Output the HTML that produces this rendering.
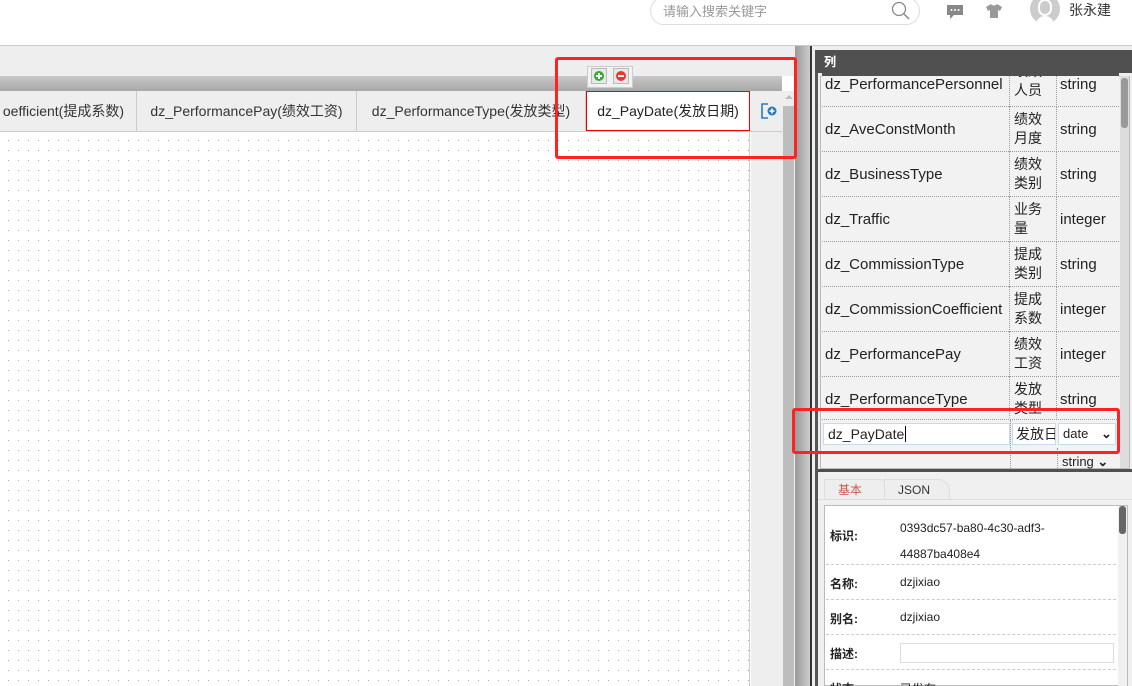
<!DOCTYPE html>
<html style="overflow:hidden;width:1132px;height:686px"><head><meta charset="utf-8">
<style>
*{margin:0;padding:0;box-sizing:border-box}
body{width:1132px;height:686px;overflow:hidden;background:#fff;font-family:"Liberation Sans","Noto Sans CJK SC",sans-serif;position:relative;color:#222}
.a{position:absolute}
.cjk{font-family:"Noto Sans CJK SC","Liberation Sans",sans-serif}
.tab{position:absolute;top:91px;height:40px;line-height:40px;font-size:14px;color:#333;border-right:1px solid #ccc;text-align:center;white-space:nowrap;overflow:hidden}
.row{position:absolute;left:822px;width:297px;height:45px;border-bottom:1px dotted #999;background:#f2f2f2;font-size:15px;color:#222}
.row div{position:absolute;top:0;height:45px}
.c1{left:0;width:188px;border-right:1px dotted #999;padding-left:3px;line-height:45px;white-space:nowrap;overflow:hidden}
.c2{left:189px;width:46px;border-right:1px dotted #999;padding-left:3px;line-height:19px;padding-top:3px;font-size:14px}
.c3{left:236px;width:61px;padding-left:2px;line-height:45px}
.fl{position:absolute;left:826px;width:290px;border-bottom:1px dashed #ccc;font-size:12px}
.fl b{position:absolute;left:4px;font-weight:bold;color:#222}
.fl span{position:absolute;left:74px;color:#222}
</style></head><body>
<div class="a" style="left:0;top:45px;width:1132px;height:1px;background:#ccc"></div>
<div class="a" style="left:650px;top:-3px;width:270px;height:28px;border:1px solid #ddd;border-radius:14px"></div>
<div class="a cjk" style="left:663px;top:1px;font-size:13px;color:#999">请输入搜索关键字</div>
<svg class="a" style="left:891px;top:1px" width="20" height="20" viewBox="0 0 20 20"><circle cx="8" cy="8" r="6.5" fill="none" stroke="#888" stroke-width="1.3"/><line x1="13" y1="13" x2="18" y2="18" stroke="#888" stroke-width="1.5"/></svg>
<svg class="a" style="left:946px;top:4px" width="18" height="16" viewBox="0 0 18 16"><path d="M1 1h16v10H8l-4 4v-4H1z" fill="#888"/><circle cx="5.5" cy="6" r="1" fill="#fff"/><circle cx="9" cy="6" r="1" fill="#fff"/><circle cx="12.5" cy="6" r="1" fill="#fff"/></svg>
<svg class="a" style="left:985px;top:3px" width="18" height="16" viewBox="0 0 18 16"><path d="M6 1L1 4l2 4 2-1v8h8V7l2 1 2-4-5-3c-1 2-5 2-6 0z" fill="#999"/></svg>
<div class="a" style="left:1030px;top:-6px;width:30px;height:30px;border-radius:50%;background:#ccc;overflow:hidden"><div class="a" style="left:8px;top:5px;width:14px;height:17px;border-radius:7px;background:#fff"></div><div class="a" style="left:6px;top:22px;width:18px;height:10px;border-radius:9px 9px 0 0;background:#fff"></div><div class="a" style="left:10px;top:7px;width:10px;height:13px;border-radius:5px;background:#ccc"></div></div>
<div class="a cjk" style="left:1069px;top:0px;font-size:14px;color:#333">张永建</div>

<div class="a" style="left:0;top:46px;width:810px;height:30px;background:#eee"></div>
<div class="a" style="left:0;top:76px;width:782px;height:15px;background:linear-gradient(#c8c8c8,#a8a8a8)"></div>
<div class="a" style="left:0;top:91px;width:782px;height:41px;background:#eee;border-bottom:1px solid #ccc"></div>
<div class="tab" style="left:0;width:137px;text-align:right;padding-right:12px">oefficient(提成系数)</div>
<div class="tab" style="left:137px;width:220px">dz_PerformancePay(绩效工资)</div>
<div class="tab" style="left:357px;width:229px">dz_PerformanceType(发放类型)</div>
<div class="a" style="left:586px;top:91px;width:164px;height:40px;background:#fff;border:1px solid #e00;line-height:38px;text-align:center;font-size:14px;color:#222">dz_PayDate(发放日期)</div>
<svg class="a" style="left:760px;top:102px" width="18" height="18" viewBox="0 0 18 18"><path d="M8 2H2v14h6" fill="none" stroke="#2a7ac0" stroke-width="1.6"/><circle cx="12" cy="9" r="4.5" fill="#2a7ac0"/><path d="M12 6.5v5M9.5 9h5" stroke="#fff" stroke-width="1.5"/></svg>
<div class="a" style="left:0;top:132px;width:750px;height:554px;background-color:#fff;background-image:radial-gradient(circle at 0.5px 0.5px,#aaa 0.6px,transparent 0.7px);background-size:10px 10px;background-position:8px 8px;border-right:1px solid #ccc"></div>
<div class="a" style="left:751px;top:132px;width:31px;height:554px;background:#eee"></div>
<div class="a" style="left:782px;top:91px;width:13px;height:595px;background:#eee"></div>
<div class="a" style="left:783px;top:106px;width:11px;height:580px;background:#bdbdbd"></div>
<div class="a" style="left:785px;top:95px;width:0;height:0;border:4px solid transparent;border-bottom-color:#bbb;border-top:0"></div>
<div class="a" style="left:795px;top:46px;width:15px;height:640px;background:linear-gradient(90deg,#999,#ccc)"></div>
<div class="a" style="left:810px;top:46px;width:2px;height:640px;background:#333"></div>
<div class="a" style="left:812px;top:46px;width:3px;height:640px;background:#eee"></div>

<div class="a" style="left:587px;top:66px;width:46px;height:22px;background:#f2f2f2;border:1px solid #ccc"></div>
<div class="a" style="left:591px;top:68px;width:16px;height:16px;border:1px solid #bbb;background:#e8e8e8"><div class="a" style="left:2px;top:2px;width:10px;height:10px;border-radius:50%;background:#3a3"></div><div class="a" style="left:4px;top:6px;width:6px;height:2px;background:#fff"></div><div class="a" style="left:6px;top:4px;width:2px;height:6px;background:#fff"></div></div>
<div class="a" style="left:613px;top:68px;width:16px;height:16px;border:1px solid #bbb;background:#e8e8e8"><div class="a" style="left:2px;top:2px;width:10px;height:10px;border-radius:50%;background:#e33"></div><div class="a" style="left:4px;top:6px;width:6px;height:2px;background:#fff"></div></div>

<div class="a" style="left:815px;top:46px;width:317px;height:640px;background:#eee"></div>
<div class="a" style="left:815px;top:50px;width:3px;height:636px;background:#555"></div>
<div class="a cjk" style="left:815px;top:50px;width:317px;height:23px;background:#505050;color:#fff;font-weight:bold;font-size:12px;line-height:23px;padding-left:9px">列</div>
<div class="a" style="left:820px;top:76px;width:310px;height:393px;overflow:hidden;background:#f2f2f2;border:1px solid #bbb"></div>
<div class="row" style="top:62px"><div class="c1">dz_PerformancePersonnel</div><div class="c2" style="padding-top:0">绩效<br>人员</div><div class="c3">string</div></div>
<div class="a" style="left:822px;top:62px;width:297px;height:14px;background:#505050"></div>
<div class="a cjk" style="left:824px;top:50px;color:#fff;font-weight:bold;font-size:12px;line-height:23px">列</div>
<div class="row" style="top:107px"><div class="c1">dz_AveConstMonth</div><div class="c2">绩效<br>月度</div><div class="c3">string</div></div>
<div class="row" style="top:152px"><div class="c1">dz_BusinessType</div><div class="c2">绩效<br>类别</div><div class="c3">string</div></div>
<div class="row" style="top:197px"><div class="c1">dz_Traffic</div><div class="c2">业务<br>量</div><div class="c3">integer</div></div>
<div class="row" style="top:242px"><div class="c1">dz_CommissionType</div><div class="c2">提成<br>类别</div><div class="c3">string</div></div>
<div class="row" style="top:287px"><div class="c1">dz_CommissionCoefficient</div><div class="c2">提成<br>系数</div><div class="c3">integer</div></div>
<div class="row" style="top:332px"><div class="c1">dz_PerformancePay</div><div class="c2">绩效<br>工资</div><div class="c3">integer</div></div>
<div class="row" style="top:377px;height:43px;overflow:hidden"><div class="c1">dz_PerformanceType</div><div class="c2">发放<br>类型</div><div class="c3">string</div></div>
<div class="row" style="top:420px;height:48px;border-bottom:none">
 <div style="left:1px;top:3px;width:187px;height:22px;background:#fff;border:1px solid #c8daf0;line-height:20px;padding-left:4px;font-size:14px">dz_PayDate<span style="border-left:1px solid #000;margin-left:1px"></span></div>
 <div style="left:190px;top:3px;width:44px;height:22px;background:#fff;border:1px solid #c8daf0;line-height:20px;padding-left:3px;overflow:hidden;white-space:nowrap;font-size:14px">发放日</div>
 <div style="left:236px;top:3px;width:58px;height:22px;background:#fff;border:1px solid #c8daf0;line-height:20px;padding-left:4px;font-size:13px">date <span style="position:absolute;left:42px;font-weight:bold">⌄</span></div>
 <div style="left:188px;top:0;width:1px;height:48px;border-left:1px dotted #999"></div>
 <div style="left:235px;top:28px;width:1px;height:20px;border-left:1px dotted #999"></div>
 <div style="left:240px;top:30px;font-size:13px;line-height:24px">string <span style="font-weight:bold">⌄</span></div>
</div>
<div class="a" style="left:1120px;top:76px;width:9px;height:392px;background:#ddd"></div>
<div class="a" style="left:1121px;top:78px;width:7px;height:50px;border-radius:3px;background:#999"></div>
<div class="a" style="left:818px;top:469px;width:314px;height:3px;background:#505050"></div>

<div class="a" style="left:818px;top:472px;width:314px;height:214px;background:#f0f0f0"></div>
<div class="a" style="left:824px;top:479px;width:67px;height:21px;border:1px solid #ddd;border-bottom:none;border-radius:0 12px 0 0;background:#eee;color:#c55;font-size:12px;line-height:20px;padding-left:13px">基本</div>
<div class="a" style="left:884px;top:479px;width:66px;height:21px;border:1px solid #ddd;border-bottom:none;border-radius:0 12px 0 0;background:#eee;color:#333;font-size:12px;line-height:20px;padding-left:13px">JSON</div>
<div class="a" style="left:818px;top:499px;width:314px;height:1px;background:#ddd"></div>
<div class="a" style="left:824px;top:505px;width:304px;height:181px;background:#fff;border:1px solid #bbb"></div>
<div class="a" style="left:1118px;top:506px;width:9px;height:180px;background:#f0f0f0"></div>
<div class="a" style="left:1119px;top:506px;width:7px;height:28px;border-radius:3px;background:#666"></div>
<div class="fl" style="top:506px;height:59px"><b style="top:21px">标识:</b><span style="top:9px;line-height:26px">0393dc57-ba80-4c30-adf3-<br>44887ba408e4</span></div>
<div class="fl" style="top:565px;height:35px"><b style="top:10px">名称:</b><span style="top:10px">dzjixiao</span></div>
<div class="fl" style="top:600px;height:35px"><b style="top:10px">别名:</b><span style="top:10px">dzjixiao</span></div>
<div class="fl" style="top:635px;height:35px"><b style="top:10px">描述:</b><span style="top:8px;width:214px;height:20px;border:1px solid #ddd"></span></div>
<div class="fl" style="top:670px;height:16px;border:none;overflow:hidden"><b style="top:10px">状态:</b><span style="top:10px">已发布</span></div>

<div class="a" style="left:555px;top:57px;width:242px;height:102px;border:3px solid #f22;border-radius:3px"></div>
<div class="a" style="left:792px;top:408px;width:328px;height:46px;border:3px solid #f22;border-radius:3px"></div>
</body></html>
